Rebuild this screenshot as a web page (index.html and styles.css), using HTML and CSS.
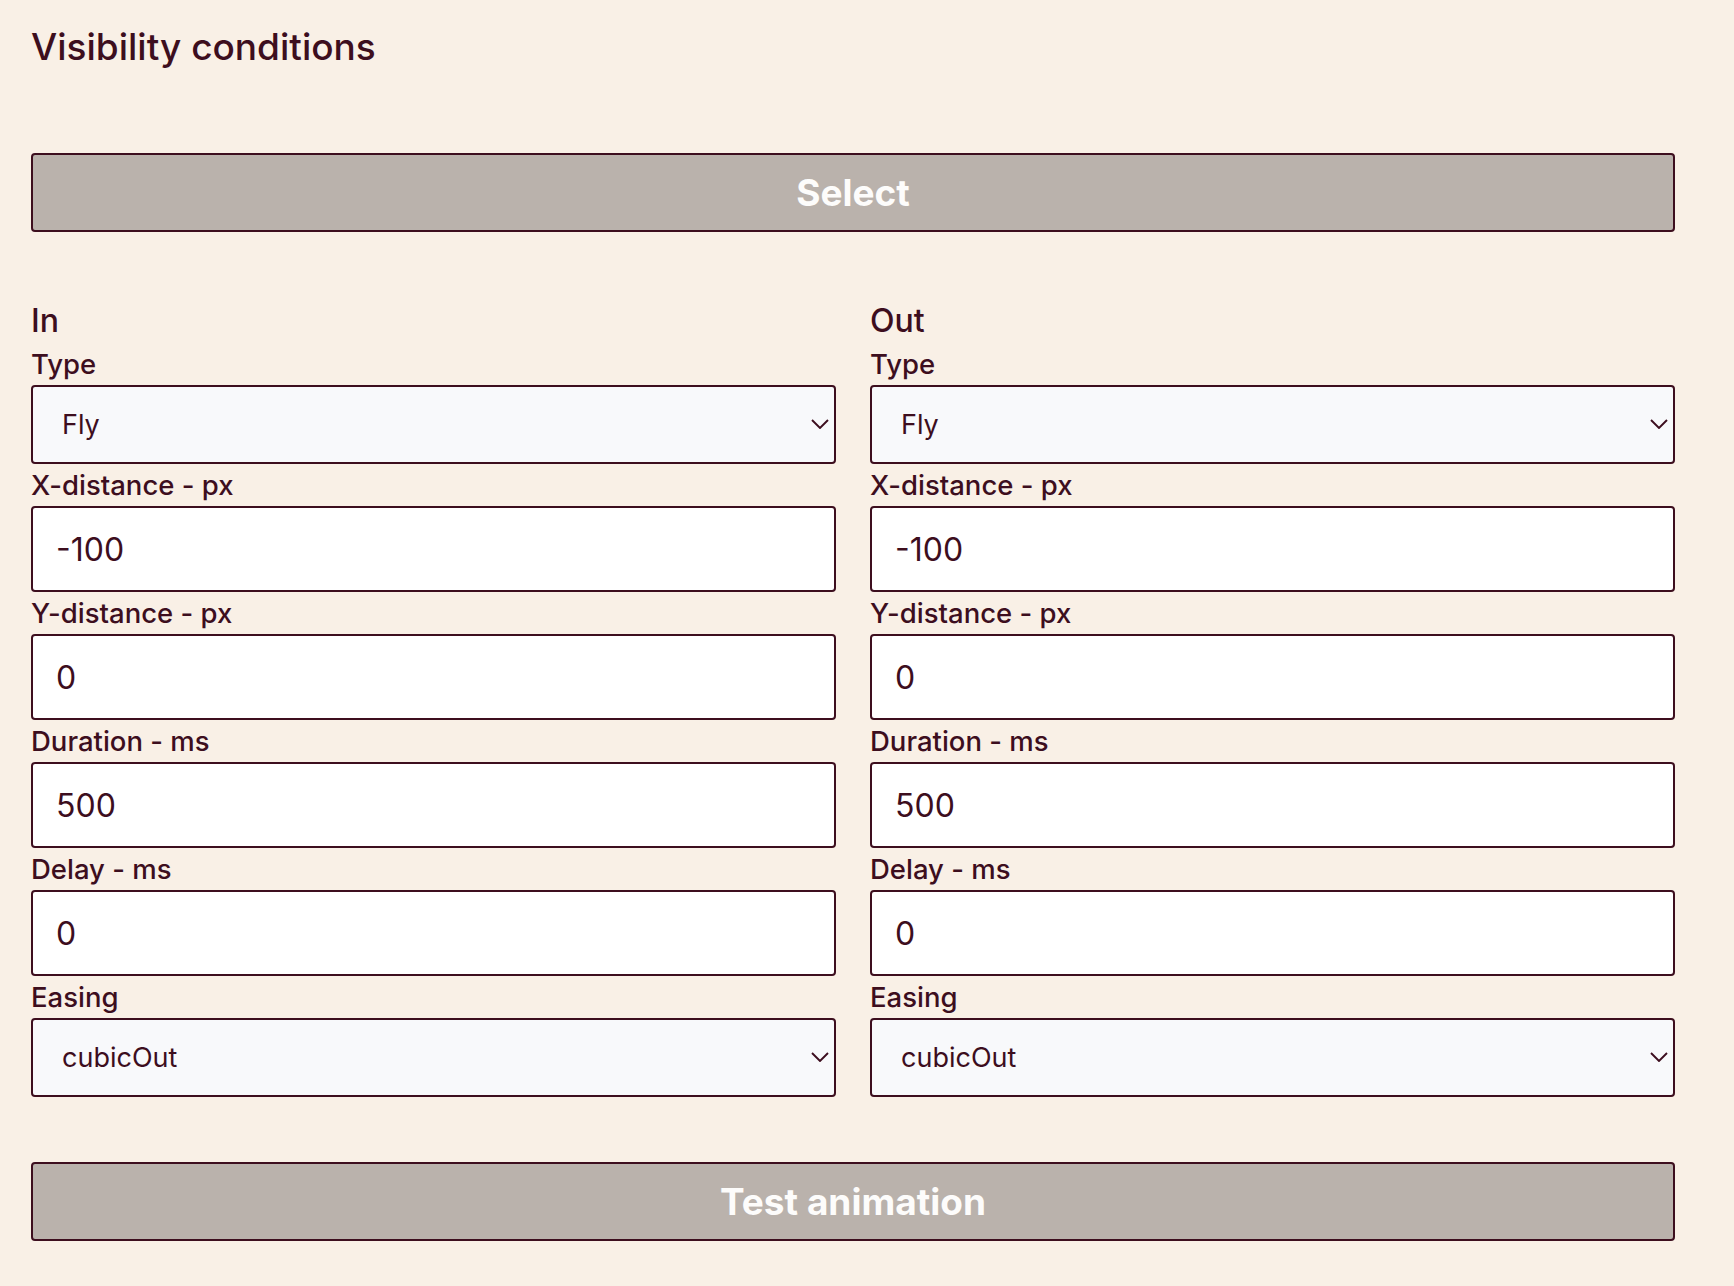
FILE: index.html
```html
<!DOCTYPE html>
<html lang="en">
<head>
<meta charset="utf-8">
<title>Visibility conditions</title>
<link rel="stylesheet" href="styles.css">
</head>
<body>
<div class="panel">
  <h2 class="title">Visibility conditions</h2>
  <button class="btn btn-top">Select</button>
  <div class="columns">
    <div class="col">
      <h3 class="col-head">In</h3>
      <label class="lbl">Type</label>
      <div class="sel-wrap">
        <select class="sel"><option>Fly</option></select>
        <svg class="chev" width="18" height="10" viewBox="0 0 18 10"><polyline points="1,1 9,9 17,1" fill="none" stroke="#3d0e1e" stroke-width="1.9"/></svg>
      </div>
      <label class="lbl">X-distance - px</label>
      <input class="inp" type="text" value="-100">
      <label class="lbl">Y-distance - px</label>
      <input class="inp" type="text" value="0">
      <label class="lbl">Duration - ms</label>
      <input class="inp" type="text" value="500">
      <label class="lbl">Delay - ms</label>
      <input class="inp" type="text" value="0">
      <label class="lbl">Easing</label>
      <div class="sel-wrap">
        <select class="sel"><option>cubicOut</option></select>
        <svg class="chev" width="18" height="10" viewBox="0 0 18 10"><polyline points="1,1 9,9 17,1" fill="none" stroke="#3d0e1e" stroke-width="1.9"/></svg>
      </div>
    </div>
    <div class="col">
      <h3 class="col-head">Out</h3>
      <label class="lbl">Type</label>
      <div class="sel-wrap">
        <select class="sel"><option>Fly</option></select>
        <svg class="chev" width="18" height="10" viewBox="0 0 18 10"><polyline points="1,1 9,9 17,1" fill="none" stroke="#3d0e1e" stroke-width="1.9"/></svg>
      </div>
      <label class="lbl">X-distance - px</label>
      <input class="inp" type="text" value="-100">
      <label class="lbl">Y-distance - px</label>
      <input class="inp" type="text" value="0">
      <label class="lbl">Duration - ms</label>
      <input class="inp" type="text" value="500">
      <label class="lbl">Delay - ms</label>
      <input class="inp" type="text" value="0">
      <label class="lbl">Easing</label>
      <div class="sel-wrap">
        <select class="sel"><option>cubicOut</option></select>
        <svg class="chev" width="18" height="10" viewBox="0 0 18 10"><polyline points="1,1 9,9 17,1" fill="none" stroke="#3d0e1e" stroke-width="1.9"/></svg>
      </div>
    </div>
  </div>
  <button class="btn btn-bottom">Test animation</button>
</div>
</body>
</html>
```
FILE: styles.css
```css
* { box-sizing: border-box; }
html, body {
  margin: 0;
  padding: 0;
  background: #f9f0e6;
}
body {
  font-family: Inter, "Noto Sans", sans-serif;
  color: #3d0e1e;
}
.panel {
  width: 1644px;
  margin-left: 31px;
  padding-top: 18px;
  display: flex;
  flex-direction: column;
}
.title {
  margin: 0;
  font-size: 37px;
  line-height: 57px;
  font-weight: 500;
  margin-bottom: 78px;
}
.btn {
  display: block;
  width: 100%;
  height: 79px;
  background: #bab2ac;
  border: 2px solid #3d0e1e;
  border-radius: 4px;
  color: #fdfcfb;
  font-family: Inter, "Noto Sans", sans-serif;
  font-size: 37px;
  font-weight: 700;
  padding: 0;
}
.btn-bottom { margin-top: 65px; }
.columns {
  display: grid;
  grid-template-columns: 1fr 1fr;
  column-gap: 34px;
  margin-top: 66px;
}
.col {
  display: flex;
  flex-direction: column;
}
.col-head {
  margin: 0;
  font-size: 32px;
  line-height: 45px;
  font-weight: 500;
}
.lbl {
  display: block;
  font-size: 27.5px;
  line-height: 42px;
  font-weight: 500;
}
.sel-wrap {
  position: relative;
}
.sel {
  display: block;
  width: 100%;
  height: 79px;
  appearance: none;
  -webkit-appearance: none;
  background: #f8f9fb;
  border: 2px solid #3d0e1e;
  border-radius: 4px;
  color: #3d0e1e;
  font-family: Inter, "Noto Sans", sans-serif;
  font-size: 27px;
  padding: 0 0 0 29px;
  outline: none;
}
.chev {
  position: absolute;
  right: 7px;
  top: 34px;
  pointer-events: none;
}
.inp {
  display: block;
  width: 100%;
  height: 86px;
  background: #ffffff;
  border: 2px solid #3d0e1e;
  border-radius: 4px;
  color: #3d0e1e;
  font-family: Inter, "Noto Sans", sans-serif;
  font-size: 32px;
  padding: 0 0 0 23px;
  outline: none;
}
```
